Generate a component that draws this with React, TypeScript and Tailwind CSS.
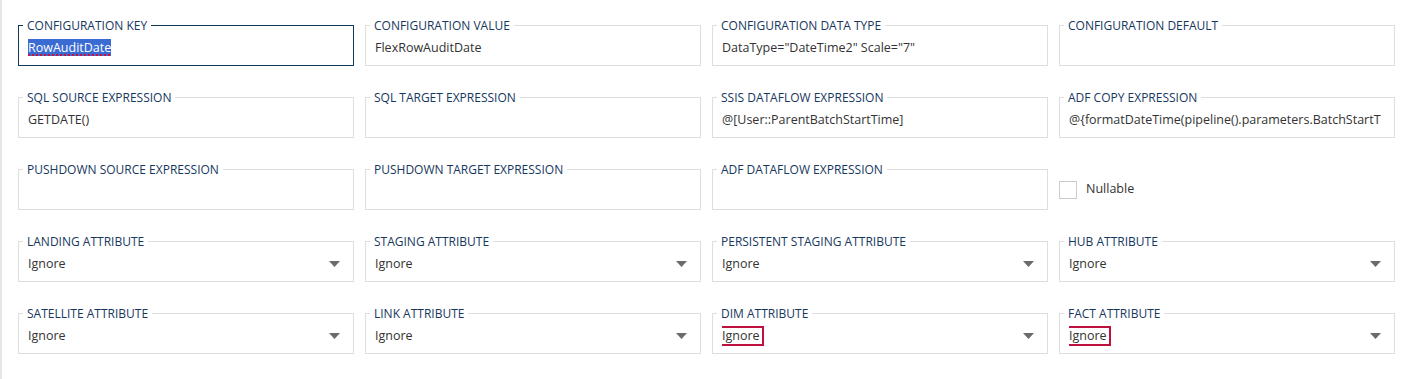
import React from "react";

type FieldProps = {
  label?: string;
  value?: string;
  kind?: "text" | "select" | "checkbox";
  focused?: boolean;
  flagged?: boolean;
  selected?: boolean;
};

const rows: FieldProps[][] = [
  [
    { label: "Configuration Key", value: "RowAuditDate", focused: true, selected: true },
    { label: "Configuration Value", value: "FlexRowAuditDate" },
    { label: "Configuration Data Type", value: 'DataType="DateTime2" Scale="7"' },
    { label: "Configuration Default", value: "" },
  ],
  [
    { label: "SQL Source Expression", value: "GETDATE()" },
    { label: "SQL Target Expression", value: "" },
    { label: "SSIS Dataflow Expression", value: "@[User::ParentBatchStartTime]" },
    {
      label: "ADF Copy Expression",
      value: "@{formatDateTime(pipeline().parameters.BatchStartTime, 'yyyy-MM-dd HH:mm:ss.fffffff')}",
    },
  ],
  [
    { label: "Pushdown Source Expression", value: "" },
    { label: "Pushdown Target Expression", value: "" },
    { label: "ADF Dataflow Expression", value: "" },
    { label: "Nullable", kind: "checkbox" },
  ],
  [
    { label: "Landing Attribute", value: "Ignore", kind: "select" },
    { label: "Staging Attribute", value: "Ignore", kind: "select" },
    { label: "Persistent Staging Attribute", value: "Ignore", kind: "select" },
    { label: "Hub Attribute", value: "Ignore", kind: "select" },
  ],
  [
    { label: "Satellite Attribute", value: "Ignore", kind: "select" },
    { label: "Link Attribute", value: "Ignore", kind: "select" },
    { label: "Dim Attribute", value: "Ignore", kind: "select", flagged: true },
    { label: "Fact Attribute", value: "Ignore", kind: "select", flagged: true },
  ],
];

const Field = ({ label, value, kind = "text", focused, flagged, selected }: FieldProps) => {
  if (kind === "checkbox") {
    return (
      <label className="flex h-[41px] items-center gap-[9px]">
        <span className="h-[18px] w-[18px] border border-[#cccccc] bg-white" />
        <span className="text-[12.5px] text-[#333333]">{label}</span>
      </label>
    );
  }

  return (
    <div
      className={`relative h-[41px] bg-white ${
        focused ? "border border-[#0f3957]" : "border border-[#dedede]"
      }`}
    >
      <span className="absolute left-[4px] top-[-7px] bg-white px-[4px] text-[12px] leading-[14px] uppercase text-[#17375e]">
        {label}
      </span>
      <div className="flex h-full items-center pl-[9px] pr-[13px] pt-[4px]">
        <div className="min-w-0 flex-1 overflow-hidden whitespace-nowrap text-[12.5px] leading-[18px] text-[#333333]">
          {selected ? (
            <span className="bg-[#3a6bd3] text-white underline decoration-dotted decoration-2 decoration-[#d0103a] underline-offset-[3px]">
              {value}
            </span>
          ) : flagged ? (
            <span className="-ml-[4px] inline-block border-2 border-[#c0103f] px-[2px] leading-[16px]">
              {value}
            </span>
          ) : (
            value
          )}
        </div>
        {kind === "select" && (
          <svg width="11" height="6" viewBox="0 0 11 6" className="ml-2 shrink-0">
            <polygon points="0,0 11,0 5.5,6" fill="#6b6b6b" />
          </svg>
        )}
      </div>
    </div>
  );
};

export default function App() {
  return (
    <div className="h-[379px] w-[1410px] bg-white font-['Segoe_UI','Open_Sans',sans-serif]">
      <div className="h-full border-l-2 border-[#e6e6e6] pl-[16px] pr-[15px] pt-[25px]">
        <div className="grid grid-cols-4 gap-x-[11px] gap-y-[31px]">
          {rows.flat().map((f, i) => (
            <Field key={i} {...f} />
          ))}
        </div>
      </div>
    </div>
  );
}
